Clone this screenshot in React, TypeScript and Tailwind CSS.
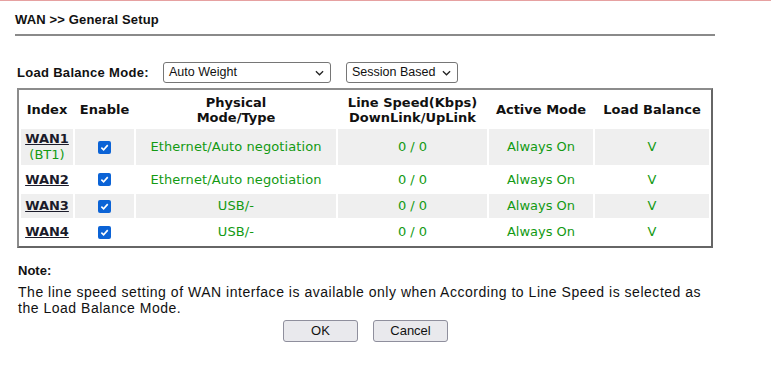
import React from 'react'

// ─── Data ─────────────────────────────────────────────────────────────────────

type Row = { name: string; sub?: string; mode: string; speed: string; active: string; lb: string }

const rows: Row[] = [
   { name: 'WAN1', sub: '(BT1)', mode: 'Ethernet/Auto negotiation', speed: '0 / 0', active: 'Always On', lb: 'V' },
   { name: 'WAN2', mode: 'Ethernet/Auto negotiation', speed: '0 / 0', active: 'Always On', lb: 'V' },
   { name: 'WAN3', mode: 'USB/-', speed: '0 / 0', active: 'Always On', lb: 'V' },
   { name: 'WAN4', mode: 'USB/-', speed: '0 / 0', active: 'Always On', lb: 'V' },
]

const rowHeights = ['h-[36px]', 'h-[25px]', 'h-[24px]', 'h-[24px]']

// ─── Small Pieces ─────────────────────────────────────────────────────────────

const Chevron = () => (
   <svg viewBox="0 0 10 6" className="w-[9px] h-[6px] shrink-0" fill="none" stroke="#222" strokeWidth="1.4">
      <path d="M1 1 L5 5 L9 1" />
   </svg>
)

const FakeSelect = ({ label, width }: { label: string; width: string }) => (
   <div className={`${width} h-[21px] flex items-center justify-between pl-[5px] pr-[6px] border border-[#767676] rounded-[3px] bg-white text-[12.5px] text-[#111] font-['Liberation_Sans',sans-serif]`}>
      <span>{label}</span>
      <Chevron />
   </div>
)

const Check = () => (
   <span className="inline-flex items-center justify-center w-[13px] h-[13px] rounded-[2px] bg-[#0b63d6]">
      <svg viewBox="0 0 10 10" className="w-[9px] h-[9px]" fill="none" stroke="white" strokeWidth="1.8">
         <path d="M1.5 5.2 L4 7.6 L8.6 2.4" />
      </svg>
   </span>
)

const Btn = ({ label }: { label: string }) => (
   <button className="w-[75px] h-[22px] border border-[#8f8f9d] rounded-[3px] bg-[#e9e9ed] text-[13px] text-[#111] font-['Liberation_Sans',sans-serif]">
      {label}
   </button>
)

// ─── Page ─────────────────────────────────────────────────────────────────────

export default function App() {
   return (
      <div className="w-[771px] h-[375px] bg-white border-t border-[#e6a1a1] overflow-hidden">
         <div className="w-[700px] ml-[15px] pt-[11px]">
            <h1 className="text-[13px] font-bold text-[#111] leading-[16px] tracking-[0.15px] font-['Liberation_Sans',sans-serif]">WAN &gt;&gt; General Setup</h1>
            <div className="mt-[6px] h-[2px] bg-[#8a8a8a]" />

            {/* Mode selectors */}
            <div className="mt-[26px] flex items-center pl-[2px]">
               <span className="w-[146px] text-[13px] font-bold text-[#111] tracking-[0.3px] font-['Liberation_Sans',sans-serif]">Load Balance Mode:</span>
               <FakeSelect label="Auto Weight" width="w-[168px]" />
               <div className="w-[15px]" />
               <FakeSelect label="Session Based" width="w-[112px]" />
            </div>

            {/* WAN table */}
            <table className="mt-[5px] ml-[2px] w-[696px] table-fixed border-separate border-spacing-[2px] border-2 border-t-[#8c8c8c] border-l-[#8c8c8c] border-r-[#666] border-b-[#666] font-['DejaVu_Sans',sans-serif] text-[13px]">
               <colgroup>
                  <col className="w-[52px]" />
                  <col className="w-[59px]" />
                  <col className="w-[200px]" />
                  <col className="w-[149px]" />
                  <col className="w-[104px]" />
                  <col />
               </colgroup>
               <thead>
                  <tr className="h-[35px] text-[#111] font-bold leading-[15px]">
                     <th>Index</th>
                     <th>Enable</th>
                     <th>Physical<br />Mode/Type</th>
                     <th>Line Speed(Kbps)<br />DownLink/UpLink</th>
                     <th>Active Mode</th>
                     <th>Load Balance</th>
                  </tr>
               </thead>
               <tbody className="text-[#139a13] text-center">
                  {rows.map((r, i) => {
                     const bg = i % 2 === 0 ? 'bg-[#efefef]' : 'bg-white'
                     return (
                        <tr key={r.name} className={rowHeights[i]}>
                           <td className={`${bg} leading-[16px]`}>
                              <a className="font-bold underline text-[#1b1b2a]">{r.name}</a>
                              {r.sub && <div>{r.sub}</div>}
                           </td>
                           <td className={bg}>
                              <div className="flex justify-center"><Check /></div>
                           </td>
                           <td className={`${bg} tracking-[0.1px]`}>{r.mode}</td>
                           <td className={bg}>{r.speed}</td>
                           <td className={bg}>{r.active}</td>
                           <td className={bg}>{r.lb}</td>
                        </tr>
                     )
                  })}
               </tbody>
            </table>

            {/* Note */}
            <div className="mt-[15px] pl-[3px] text-[14px] text-[#111] leading-[16px] tracking-[0.52px] font-['Liberation_Sans',sans-serif]">
               <p className="font-bold tracking-normal text-[13px]">Note:</p>
               <p className="mt-[5px] w-[697px]">
                  The line speed setting of WAN interface is available only when According to Line Speed is selected as the Load Balance Mode.
               </p>
            </div>

            <div className="mt-[4px] flex gap-[15px] pl-[268px]">
               <Btn label="OK" />
               <Btn label="Cancel" />
            </div>
         </div>
      </div>
   )
}
